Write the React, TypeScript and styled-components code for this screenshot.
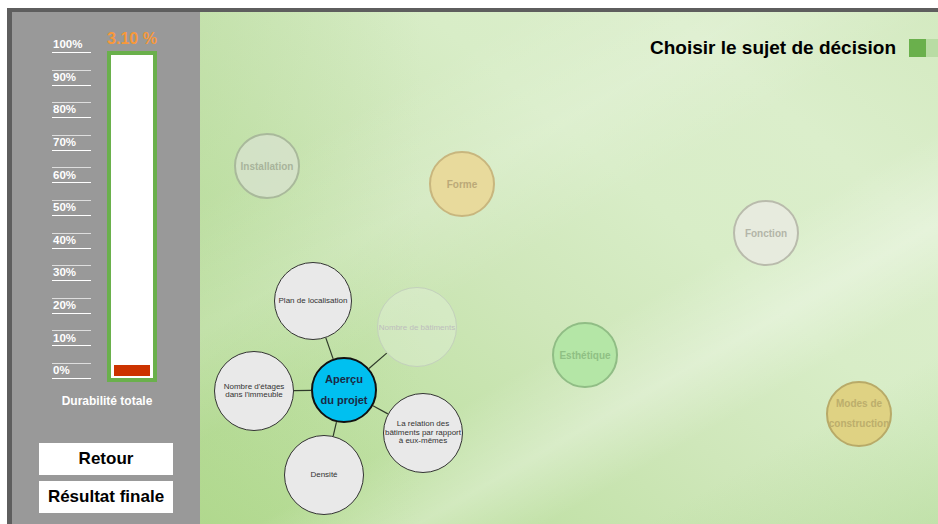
import React from "react";
import styled, { createGlobalStyle, css } from "styled-components";

const Global = createGlobalStyle`
  html, body { margin: 0; padding: 0; overflow: hidden; background: #fff; }
  body { padding: 8px 0 0 7px; font-family: "Liberation Sans", Arial, sans-serif; }
  * { box-sizing: border-box; }
`;

const Frame = styled.div`
  height: 516px;
  width: 931px;
  border-top: 4px solid #5e5e5e;
  border-left: 5px solid #5e5e5e;
  display: flex;
  overflow: hidden;
`;

const Panel = styled.aside`
  width: 188px;
  flex: none;
  background: #999999;
  display: flex;
  flex-direction: column;
  padding-top: 17px;
`;

const Gauge = styled.div`
  display: flex;
  align-items: flex-start;
  padding-left: 40px;
  gap: 16px;
`;

const Scale = styled.div`
  width: 39px;
  margin-top: 8px;
  display: flex;
  flex-direction: column;
  gap: 16.6px;
`;

const ScaleMark = styled.div<{ $top: boolean }>`
  height: 16px;
  border-bottom: 1px solid #ffffff;
  border-top: ${(p) => (p.$top ? "1px solid #dedede" : "1px solid transparent")};
  display: flex;
  align-items: center;
  color: #fff;
  font-weight: bold;
  font-size: 11.5px;
  line-height: 1;
  padding-left: 1px;
`;

const BarColumn = styled.div`
  width: 50px;
  display: flex;
  flex-direction: column;
  align-items: center;
  gap: 2px;
`;

const Percent = styled.div`
  height: 20px;
  line-height: 20px;
  color: #f7983a;
  font-weight: bold;
  font-size: 16px;
  white-space: nowrap;
`;

const Tube = styled.div`
  width: 50px;
  height: 331px;
  border: 4px solid #6ab04c;
  background: #fff;
  display: flex;
  flex-direction: column;
  justify-content: flex-end;
  align-items: center;
  padding-bottom: 2px;
`;

const Fill = styled.div`
  width: 36px;
  background: #cc3300;
`;

const Caption = styled.div`
  margin-top: 12px;
  text-align: center;
  color: #fff;
  font-weight: bold;
  font-size: 12px;
  line-height: 14px;
  padding-left: 2px;
`;

const Buttons = styled.div`
  margin-top: 35px;
  display: flex;
  flex-direction: column;
  align-items: center;
  gap: 6px;
`;

const Button = styled.button`
  width: 134px;
  height: 32px;
  border: none;
  background: #fff;
  color: #000;
  font-family: "Liberation Sans", Arial, sans-serif;
  font-weight: bold;
  font-size: 17px;
  padding: 0;
  cursor: pointer;
`;

const Stage = styled.main`
  position: relative;
  flex: 1;
  overflow: hidden;
  background:
    linear-gradient(150deg, rgba(255,255,255,0) 58%, rgba(255,255,255,0.3) 68%, rgba(255,255,255,0) 76%),
    linear-gradient(150deg, rgba(255,255,255,0) 20%, rgba(255,255,255,0.15) 34%, rgba(255,255,255,0) 46%),
    linear-gradient(150deg, rgba(255,255,255,0) 82%, rgba(165,212,135,0.4) 100%),
    linear-gradient(90deg, rgba(175,215,145,0.35) 0%, rgba(175,215,145,0) 30%),
    linear-gradient(40deg, #b1d98c 0%, #c3e2a9 26%, #cfe7ba 44%, #d8edc7 62%, #dbeecb 80%, #d4eac1 100%);
`;

const Header = styled.header`
  display: flex;
  align-items: center;
  padding: 24px 0 0 450px;
  height: 47px;
  white-space: nowrap;
`;

const Title = styled.h1`
  margin: 0;
  font-size: 19px;
  font-weight: bold;
  color: #000;
  line-height: 22px;
`;

const Swatch = styled.span<{ $faded?: boolean }>`
  flex: none;
  width: 17px;
  height: 18px;
  margin-left: ${(p) => (p.$faded ? "0" : "13px")};
  background: ${(p) => (p.$faded ? "#b9dca4" : "#6ab04c")};
`;

type Tone = "install" | "forme" | "fonction" | "esthe" | "modes" | "node" | "faded" | "hub";

const tones: Record<Tone, ReturnType<typeof css>> = {
  install: css`background: rgba(214, 226, 203, 0.85); border: 2px solid #a9b99b; color: #a8b49b; font-weight: bold; font-size: 10px;`,
  forme: css`background: #e8da9c; border: 2px solid #c8b67e; color: #bba978; font-weight: bold; font-size: 10px;`,
  fonction: css`background: rgba(232, 234, 224, 0.9); border: 2px solid #b9bbac; color: #b3b5a8; font-weight: bold; font-size: 10px;`,
  esthe: css`background: #b4e6a6; border: 2px solid #90bd85; color: #8fc084; font-weight: bold; font-size: 10px;`,
  modes: css`background: #dfd283; border: 2px solid #b8aa68; color: #bcae6c; font-weight: bold; font-size: 10px; line-height: 20px;`,
  node: css`background: #e9e9e9; border: 1px solid #333; color: #333; font-size: 8px; line-height: 8.5px;`,
  faded: css`background: rgba(240, 246, 234, 0.3); border: 1px solid #c3d0bc; color: #bdbdbd; font-size: 8px;`,
  hub: css`background: #00c0f0; border: 2px solid #111; color: #1b2a45; font-weight: bold; font-size: 11px; line-height: 21px;`,
};

const Bubble = styled.div<{ $x: number; $y: number; $d: number; $tone: Tone }>`
  position: absolute;
  left: ${(p) => p.$x}px;
  top: ${(p) => p.$y}px;
  width: ${(p) => p.$d}px;
  height: ${(p) => p.$d}px;
  border-radius: 50%;
  display: flex;
  align-items: center;
  justify-content: center;
  text-align: center;
  white-space: nowrap;
  ${(p) => tones[p.$tone]}
`;

const Links = styled.svg`
  position: absolute;
  left: 0;
  top: 0;
  width: 100%;
  height: 100%;
  pointer-events: none;
`;

const marks = ["100%", "90%", "80%", "70%", "60%", "50%", "40%", "30%", "20%", "10%", "0%"];

type Node = { x: number; y: number; d: number; tone: Tone; lines: string[] };

const topics: Node[] = [
  { x: 34, y: 121, d: 66, tone: "install", lines: ["Installation"] },
  { x: 229, y: 139, d: 66, tone: "forme", lines: ["Forme"] },
  { x: 533, y: 188, d: 66, tone: "fonction", lines: ["Fonction"] },
  { x: 352, y: 310, d: 66, tone: "esthe", lines: ["Esthétique"] },
  { x: 626, y: 369, d: 66, tone: "modes", lines: ["Modes de", "construction"] },
];

const hub = { cx: 144, cy: 378, r: 33 };

const children: Node[] = [
  { x: 74, y: 250, d: 78, tone: "node", lines: ["Plan de localisation"] },
  { x: 177, y: 275, d: 80, tone: "faded", lines: ["Nombre de bâtiments"] },
  { x: 14, y: 339, d: 80, tone: "node", lines: ["Nombre d'étages", "dans l'immeuble"] },
  { x: 84, y: 423, d: 80, tone: "node", lines: ["Densité"] },
  { x: 183, y: 381, d: 80, tone: "node", lines: ["La relation des", "bâtiments par rapport", "à eux-mêmes"] },
];

function Label({ lines }: { lines: string[] }) {
  return (
    <div>
      {lines.map((l, i) => (
        <div key={i}>{l}</div>
      ))}
    </div>
  );
}

export default function App() {
  const value = 3.1;
  const fillH = 11;
  return (
    <>
      <Global />
      <Frame>
        <Panel>
          <Gauge>
            <Scale>
              {marks.map((m, i) => (
                <ScaleMark key={m} $top={i > 0}>
                  {m}
                </ScaleMark>
              ))}
            </Scale>
            <BarColumn>
              <Percent>{value.toFixed(2)} %</Percent>
              <Tube>
                <Fill style={{ height: fillH }} />
              </Tube>
            </BarColumn>
          </Gauge>
          <Caption>Durabilité totale</Caption>
          <Buttons>
            <Button>Retour</Button>
            <Button>Résultat finale</Button>
          </Buttons>
        </Panel>
        <Stage>
          <Header>
            <Title>Choisir le sujet de décision</Title>
            <Swatch />
            <Swatch $faded />
          </Header>
          {topics.map((t) => (
            <Bubble key={t.lines[0]} $x={t.x} $y={t.y} $d={t.d} $tone={t.tone}>
              <Label lines={t.lines} />
            </Bubble>
          ))}
          <Links>
            {children.map((c) => {
              const r = c.d / 2;
              const nx = c.x + r;
              const ny = c.y + r;
              const dx = nx - hub.cx;
              const dy = ny - hub.cy;
              const len = Math.hypot(dx, dy);
              const ux = dx / len;
              const uy = dy / len;
              return (
                <line
                  key={c.lines[0]}
                  x1={hub.cx + ux * hub.r}
                  y1={hub.cy + uy * hub.r}
                  x2={nx - ux * r}
                  y2={ny - uy * r}
                  stroke="#2f3a2a"
                  strokeWidth={1.2}
                />
              );
            })}
          </Links>
          {children.map((c) => (
            <Bubble key={c.lines[0]} $x={c.x} $y={c.y} $d={c.d} $tone={c.tone}>
              <Label lines={c.lines} />
            </Bubble>
          ))}
          <Bubble $x={hub.cx - hub.r} $y={hub.cy - hub.r} $d={hub.r * 2} $tone="hub">
            <Label lines={["Aperçu", "du projet"]} />
          </Bubble>
        </Stage>
      </Frame>
    </>
  );
}
